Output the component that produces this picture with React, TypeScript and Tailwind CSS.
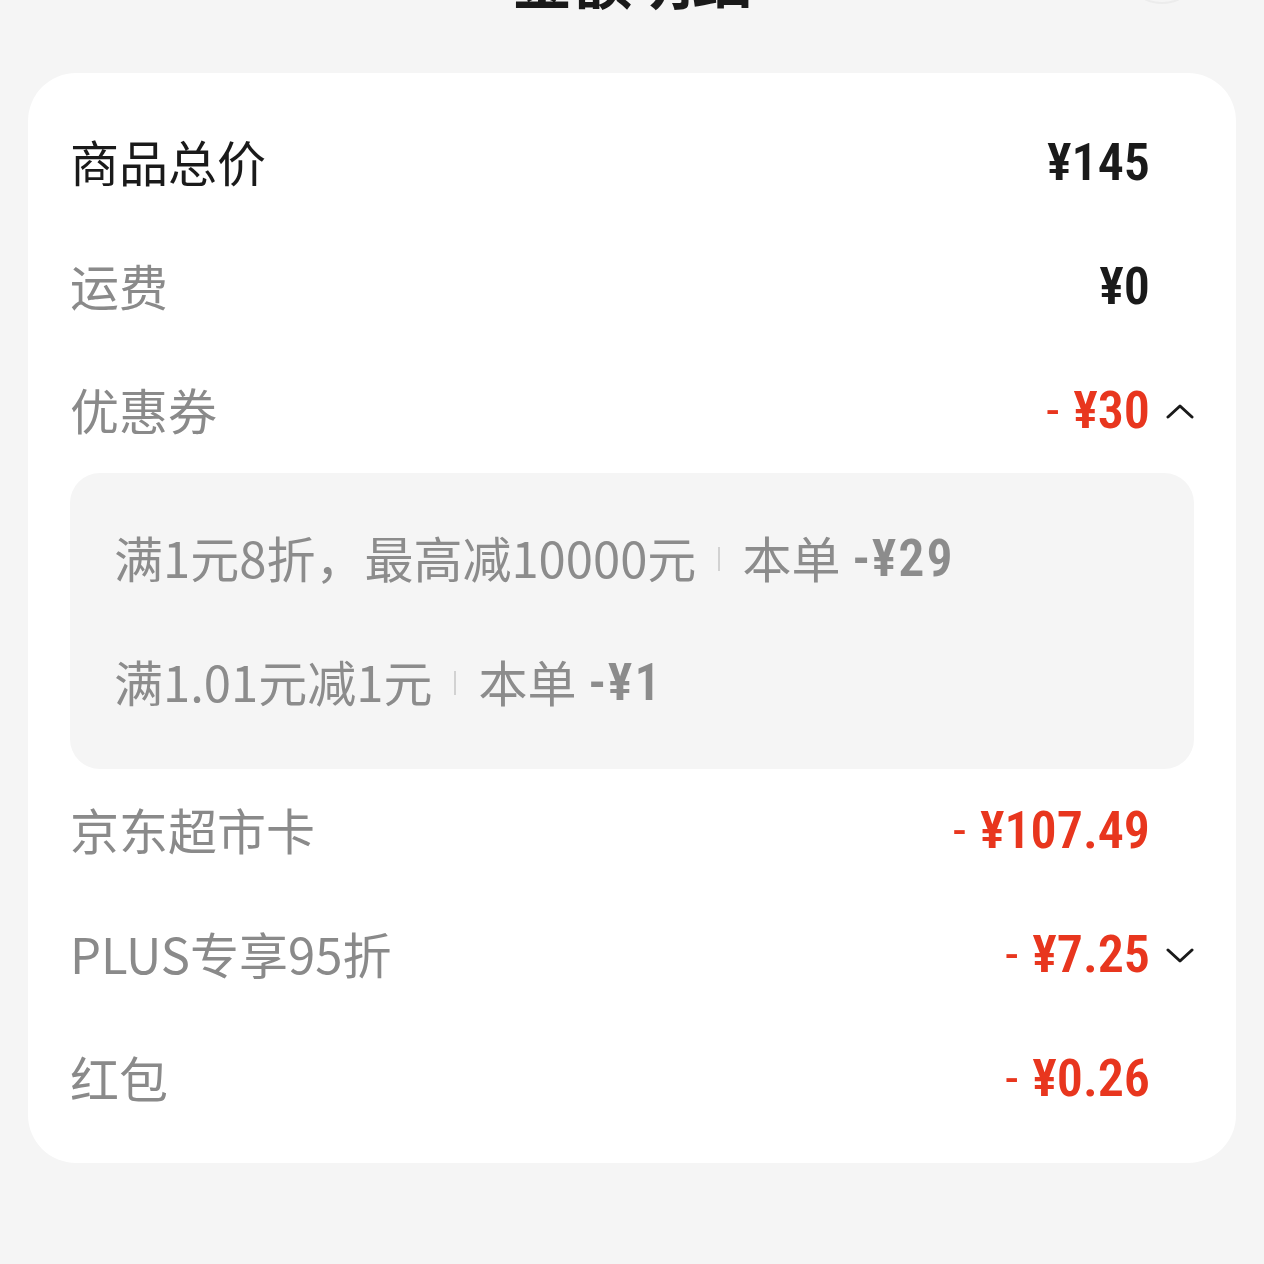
import React from "react";

const cjk = "font-['Noto_Sans_CJK_SC','Noto_Sans',sans-serif]";
const num = "font-['Roboto','Noto_Sans',sans-serif] [font-stretch:75%]";

type Row = {
  label: string;
  amount: string;
  minus?: boolean;
  dark?: boolean;
  chevron?: "up" | "down";
};

const topRows: Row[] = [
  { label: "商品总价", amount: "¥145", dark: true },
  { label: "运费", amount: "¥0" },
  { label: "优惠券", amount: "¥30", minus: true, chevron: "up" },
];

const bottomRows: Row[] = [
  { label: "京东超市卡", amount: "¥107.49", minus: true },
  { label: "PLUS专享95折", amount: "¥7.25", minus: true, chevron: "down" },
  { label: "红包", amount: "¥0.26", minus: true },
];

const coupons = [
  { text: "满1元8折，最高减10000元", off: "-¥29" },
  { text: "满1.01元减1元", off: "-¥1" },
];

function Chevron({ dir }: { dir: "up" | "down" }) {
  return (
    <svg width="28" height="16" viewBox="0 0 28 16" fill="none">
      <path
        d={dir === "up" ? "M2 14 L14 3 L26 14" : "M2 3 L14 14 L26 3"}
        stroke="#1a1a1a"
        strokeWidth="3"
        strokeLinecap="round"
        strokeLinejoin="round"
      />
    </svg>
  );
}

function AmountRow({ row }: { row: Row }) {
  return (
    <div className="flex h-[124px] items-center">
      <div
        className={`${cjk} mb-[6px] flex-1 text-[49px] leading-none ${
          row.dark ? "text-[#1a1a1a]" : "text-[#8a8a8a]"
        }`}
      >
        {row.label}
      </div>
      <div
        className={`${num} flex items-center text-[52px] font-semibold leading-none ${
          row.minus ? "text-[#e8361e]" : "text-[#1a1a1a]"
        }`}
      >
        {row.minus && <span className="mr-[14px] font-normal">-</span>}
        <span>{row.amount}</span>
      </div>
      <div className="flex w-[44px] justify-end">
        {row.chevron && <Chevron dir={row.chevron} />}
      </div>
    </div>
  );
}

export default function App() {
  return (
    <div className="h-[1264px] w-[1264px] overflow-hidden bg-[#f5f5f5]">
      {/* header, mostly scrolled off */}
      <div className="relative flex h-[73px] flex-col">
        <div className={`${cjk} mt-[-52px] text-center text-[60px] font-bold leading-none text-[#1a1a1a]`}>
          金额明细
        </div>
        <div className="absolute right-[62px] top-[-76px] h-[80px] w-[80px] rounded-full border-2 border-[#ececec]" />
      </div>

      <div className="mx-[28px] rounded-[48px] bg-white px-[42px] pb-[22px] pt-[28px]">
        {topRows.map((r) => (
          <AmountRow key={r.label} row={r} />
        ))}

        <div className="rounded-[30px] bg-[#f5f5f5] px-[44px] py-[24px]">
          {coupons.map((c) => (
            <div key={c.text} className="flex h-[124px] items-center text-[#8c8c8c]">
              <span className={`${cjk} mb-[6px] text-[49px] leading-none`}>{c.text}</span>
              <span className="ml-[22px] mr-[22px] h-[24px] w-[2px] bg-[#d2d2d2]" />
              <span className={`${cjk} mb-[6px] mr-[12px] text-[49px] leading-none`}>本单</span>
              <span className={`${num} text-[52px] font-semibold leading-none tracking-[2px]`}>{c.off}</span>
            </div>
          ))}
        </div>

        {bottomRows.map((r) => (
          <AmountRow key={r.label} row={r} />
        ))}
      </div>
    </div>
  );
}
